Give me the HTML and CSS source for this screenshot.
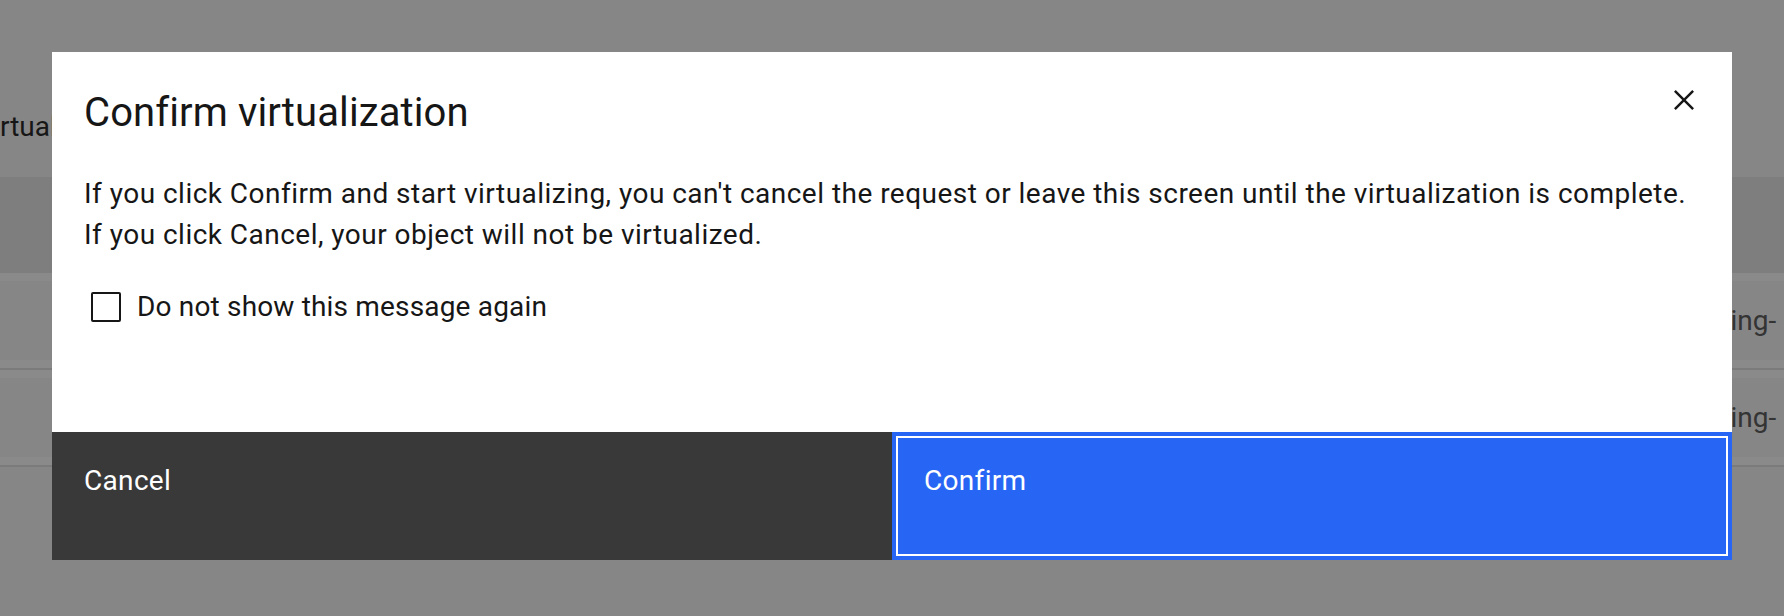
FILE: index.html
```html
<!DOCTYPE html>
<html lang="en">
<head>
<meta charset="utf-8">
<title>Confirm virtualization</title>
<link rel="stylesheet" href="styles.css">
</head>
<body>
  <div class="page">
    <div class="page-title">rtual</div>
    <div class="table">
      <div class="table-head"></div>
      <div class="table-row"><span class="cell-end">staging-</span></div>
      <div class="table-row"><span class="cell-end">staging-</span></div>
    </div>
  </div>

  <div class="overlay">
    <div class="modal" role="dialog" aria-labelledby="modal-title">
      <div class="modal-header">
        <h2 class="modal-title" id="modal-title">Confirm virtualization</h2>
        <button class="modal-close" aria-label="Close">
          <svg class="close-icon" viewBox="0 0 32 32" width="40" height="40" aria-hidden="true">
            <path d="M24 9.4L22.6 8 16 14.6 9.4 8 8 9.4 14.6 16 8 22.6 9.4 24 16 17.4 22.6 24 24 22.6 17.4 16 24 9.4z"/>
          </svg>
        </button>
      </div>
      <div class="modal-content">
        <p class="modal-text">If you click Confirm and start virtualizing, you can't cancel the request or leave this screen until the virtualization is complete.<br>If you click Cancel, your object will not be virtualized.</p>
        <label class="checkbox">
          <span class="checkbox-box"></span>
          <span class="checkbox-label">Do not show this message again</span>
        </label>
      </div>
      <div class="modal-footer">
        <button class="btn btn-secondary">Cancel</button>
        <button class="btn btn-primary">Confirm</button>
      </div>
    </div>
  </div>
</body>
</html>
```

FILE: styles.css
```css
* {
  box-sizing: border-box;
}

html, body {
  margin: 0;
  padding: 0;
  width: 100%;
  height: 100%;
  overflow: hidden;
}

body {
  background: #f6f6f6;
  font-family: Roboto, "Liberation Sans", Arial, sans-serif;
  color: #161616;
}

/* ---------- underlying page ---------- */
.page {
  width: 100%;
}

.page-title {
  margin-top: 107px;
  font-size: 28px;
  line-height: 40px;
  white-space: nowrap;
  color: #161616;
}

.table {
  margin-top: 30px;
}

.table-head {
  height: 96px;
  background: #e6e6e6;
}

.table-row {
  height: 97px;
  display: flex;
  align-items: center;
  justify-content: flex-end;
  border-bottom: 2px solid #e0e0e0;
  background: linear-gradient(#ffffff 0 8px, #f6f6f6 8px calc(100% - 8px), #ffffff calc(100% - 8px));
}

.cell-end {
  width: 108px;
  flex: none;
  font-size: 28px;
  line-height: 40px;
  white-space: nowrap;
  color: #525252;
}

/* ---------- overlay + modal ---------- */
.overlay {
  position: fixed;
  inset: 0;
  background: rgba(22, 22, 22, 0.5);
  display: flex;
  justify-content: center;
  align-items: flex-start;
  padding-top: 52px;
}

.modal {
  width: 1680px;
  height: 508px;
  background: #ffffff;
  display: flex;
  flex-direction: column;
}

.modal-header {
  display: flex;
  justify-content: space-between;
  align-items: flex-start;
  height: 96px;
}

.modal-title {
  margin: 0;
  padding: 33px 0 0 32px;
  font-size: 40px;
  line-height: 56px;
  font-weight: 400;
  letter-spacing: 0.1px;
  color: #161616;
}

.modal-close {
  width: 96px;
  height: 96px;
  flex: none;
  border: none;
  background: transparent;
  padding: 0;
  display: flex;
  align-items: center;
  justify-content: center;
  cursor: pointer;
}

.close-icon {
  fill: #161616;
}

.modal-content {
  flex: 1;
  padding: 25px 32px 0 32px;
}

.modal-text {
  margin: 0;
  font-size: 28px;
  line-height: 41px;
  letter-spacing: 0.47px;
  color: #161616;
}

.checkbox {
  margin-top: 32px;
  display: flex;
  align-items: center;
  height: 40px;
  cursor: pointer;
}

.checkbox-box {
  width: 30px;
  height: 30px;
  margin-left: 7px;
  margin-right: 16px;
  border: 2px solid #161616;
  border-radius: 2px;
  flex: none;
}

.checkbox-label {
  font-size: 28px;
  line-height: 40px;
  letter-spacing: 0.17px;
  color: #161616;
}

.modal-footer {
  height: 128px;
  display: flex;
}

.btn {
  flex: 1;
  height: 100%;
  margin: 0;
  padding: 29px 30px 0 30px;
  border: 2px solid transparent;
  font-family: inherit;
  font-size: 28px;
  line-height: 36px;
  letter-spacing: 0.32px;
  text-align: left;
  color: #ffffff;
  display: flex;
  align-items: flex-start;
  cursor: pointer;
}

.btn-secondary {
  background: #393939;
  border-color: #393939;
}

.btn-primary {
  background: #2766f4;
  border-color: #2766f4;
  box-shadow: inset 0 0 0 2px #2766f4, inset 0 0 0 4px #ffffff;
}
```
